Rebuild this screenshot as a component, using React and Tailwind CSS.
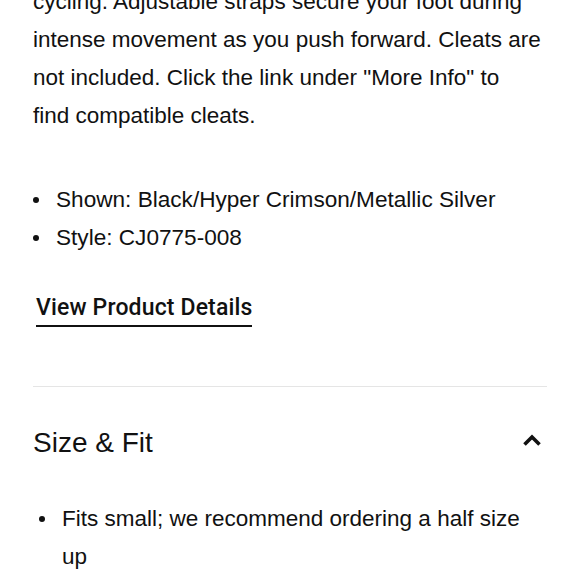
export default function App() {
  return (
    <div className="w-[580px] h-[580px] overflow-hidden bg-white px-[33px] text-[#111111] font-['Liberation_Sans',Arial,sans-serif]">
      <p className="-mt-[17px] text-[22.5px] leading-[38px]">
        cycling. Adjustable straps secure your foot during
        <br />
        intense movement as you push forward. Cleats are
        <br />
        not included. Click the link under "More Info" to
        <br />
        find compatible cleats.
      </p>

      <ul className="mt-[46px] text-[22.6px] leading-[38px]">
        <li className="flex items-center">
          <span className="w-[23px] shrink-0 flex">
            <span className="w-[6px] h-[6px] rounded-full bg-[#111111]" />
          </span>
          Shown: Black/Hyper Crimson/Metallic Silver
        </li>
        <li className="flex items-center">
          <span className="w-[23px] shrink-0 flex">
            <span className="w-[6px] h-[6px] rounded-full bg-[#111111]" />
          </span>
          Style: CJ0775-008
        </li>
      </ul>

      <div className="mt-[38px] pl-[3px]">
        <a className="inline-block text-[23px] leading-[26px] font-medium tracking-[0.15px] font-['Roboto',Arial,sans-serif] pb-1 border-b-2 border-[#111111]">
          View Product Details
        </a>
      </div>

      <div className="mt-[59px] border-t border-[#e5e5e5]" />

      <div className="mt-[40px] flex items-center justify-between h-[32px]">
        <h2 className="text-[28px] leading-[32px]">Size &amp; Fit</h2>
        <svg width="20" height="14" viewBox="0 0 20 14" className="mr-[5px] -mt-[6px]">
          <polyline points="2.5,11.5 10,4 17.5,11.5" fill="none" stroke="#111111" strokeWidth="3.6" />
        </svg>
      </div>

      <ul className="mt-[41px] text-[22.5px] leading-[38px]">
        <li className="flex">
          <span className="w-[29px] shrink-0 h-[38px] flex items-center pl-[6px]">
            <span className="w-[6px] h-[6px] rounded-full bg-[#111111]" />
          </span>
          <span>
            Fits small; we recommend ordering a half size
            <br />
            up
          </span>
        </li>
      </ul>
    </div>
  );
}
